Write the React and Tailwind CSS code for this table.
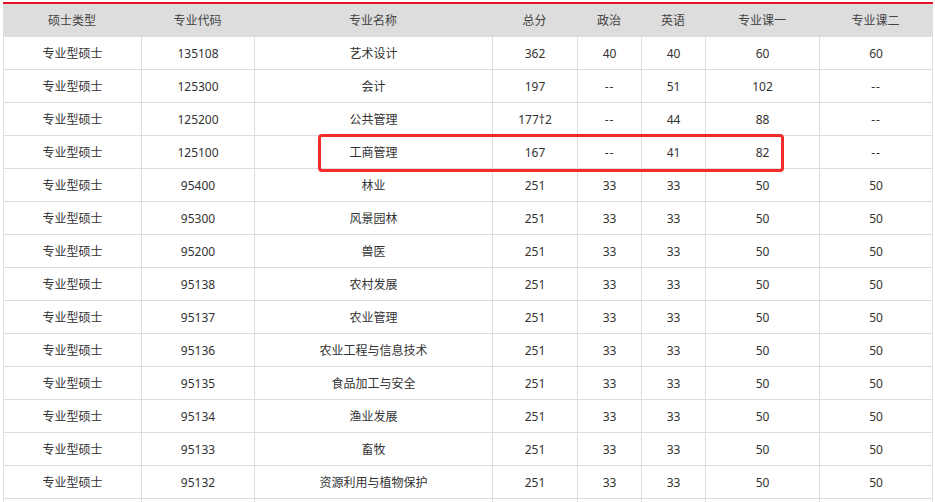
const cols = "grid grid-cols-[138px_113px_238px_85px_64px_64px_114px_113px]";

const head = ["硕士类型", "专业代码", "专业名称", "总分", "政治", "英语", "专业课一", "专业课二"];

const rows = [
  ["专业型硕士", "135108", "艺术设计", "362", "40", "40", "60", "60"],
  ["专业型硕士", "125300", "会计", "197", "--", "51", "102", "--"],
  ["专业型硕士", "125200", "公共管理", "177†2", "--", "44", "88", "--"],
  ["专业型硕士", "125100", "工商管理", "167", "--", "41", "82", "--"],
  ["专业型硕士", "95400", "林业", "251", "33", "33", "50", "50"],
  ["专业型硕士", "95300", "风景园林", "251", "33", "33", "50", "50"],
  ["专业型硕士", "95200", "兽医", "251", "33", "33", "50", "50"],
  ["专业型硕士", "95138", "农村发展", "251", "33", "33", "50", "50"],
  ["专业型硕士", "95137", "农业管理", "251", "33", "33", "50", "50"],
  ["专业型硕士", "95136", "农业工程与信息技术", "251", "33", "33", "50", "50"],
  ["专业型硕士", "95135", "食品加工与安全", "251", "33", "33", "50", "50"],
  ["专业型硕士", "95134", "渔业发展", "251", "33", "33", "50", "50"],
  ["专业型硕士", "95133", "畜牧", "251", "33", "33", "50", "50"],
  ["专业型硕士", "95132", "资源利用与植物保护", "251", "33", "33", "50", "50"],
  ["", "", "", "", "", "", "", ""],
];

export default function App() {
  return (
    <div
      className="relative h-[502px] overflow-hidden bg-white pl-[3px] pt-[2px] text-[12px] text-[#333]"
      style={{ fontFamily: '"Noto Sans", "Noto Sans CJK SC", sans-serif' }}
    >
      <div className="w-[930px] border-t-2 border-[#e3132c]">
        {/* 表头 */}
        <div className={`${cols} h-[33px] bg-[#dddddd] text-[#444]`}>
          {head.map((h) => (
            <div key={h} className="flex items-center justify-center pt-px">
              {h}
            </div>
          ))}
        </div>

        {/* 数据行 */}
        {rows.map((r, i) => (
          <div key={i} className={`${cols} h-[33px] border-b border-r border-[#dddddd]`}>
            {r.map((c, j) => (
              <div
                key={j}
                className={`flex items-center justify-center border-l border-[#dddddd] pt-[2px] ${c === "--" ? "tracking-[1px]" : ""}`}
              >
                {c}
              </div>
            ))}
          </div>
        ))}
      </div>

      {/* 红框标注 */}
      <div className="absolute left-[318px] top-[134px] h-[38px] w-[466px] rounded-[4px] border-[3px] border-[#f52a2a]" />
    </div>
  );
}
